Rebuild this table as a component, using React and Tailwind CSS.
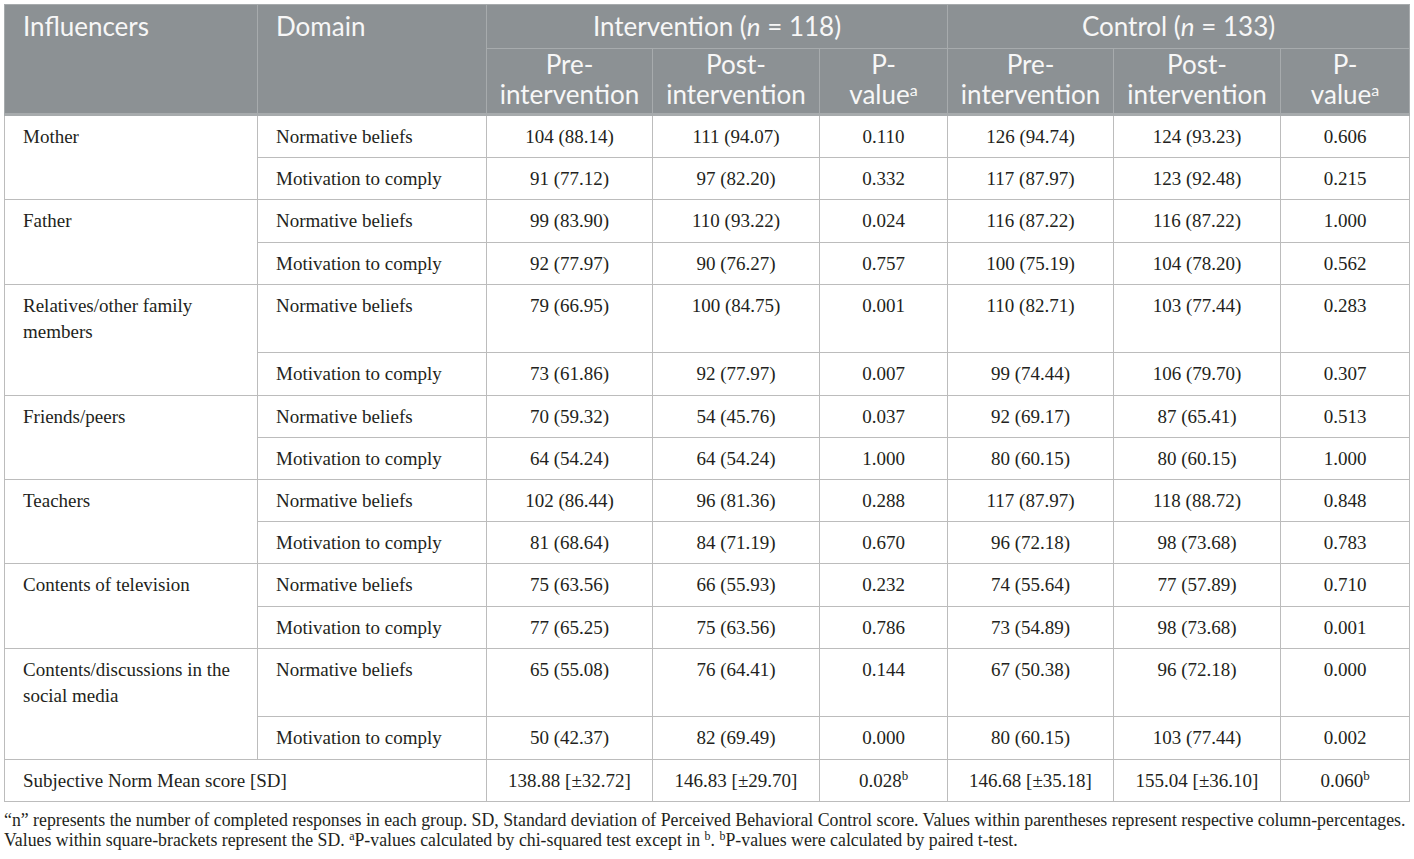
const rows = [
  {
    name: "Mother",
    wrap: false,
    data: [
      ["Normative beliefs", "104 (88.14)", "111 (94.07)", "0.110", "126 (94.74)", "124 (93.23)", "0.606"],
      ["Motivation to comply", "91 (77.12)", "97 (82.20)", "0.332", "117 (87.97)", "123 (92.48)", "0.215"],
    ],
  },
  {
    name: "Father",
    wrap: false,
    data: [
      ["Normative beliefs", "99 (83.90)", "110 (93.22)", "0.024", "116 (87.22)", "116 (87.22)", "1.000"],
      ["Motivation to comply", "92 (77.97)", "90 (76.27)", "0.757", "100 (75.19)", "104 (78.20)", "0.562"],
    ],
  },
  {
    name: "Relatives/other family members",
    wrap: true,
    data: [
      ["Normative beliefs", "79 (66.95)", "100 (84.75)", "0.001", "110 (82.71)", "103 (77.44)", "0.283"],
      ["Motivation to comply", "73 (61.86)", "92 (77.97)", "0.007", "99 (74.44)", "106 (79.70)", "0.307"],
    ],
  },
  {
    name: "Friends/peers",
    wrap: false,
    data: [
      ["Normative beliefs", "70 (59.32)", "54 (45.76)", "0.037", "92 (69.17)", "87 (65.41)", "0.513"],
      ["Motivation to comply", "64 (54.24)", "64 (54.24)", "1.000", "80 (60.15)", "80 (60.15)", "1.000"],
    ],
  },
  {
    name: "Teachers",
    wrap: false,
    data: [
      ["Normative beliefs", "102 (86.44)", "96 (81.36)", "0.288", "117 (87.97)", "118 (88.72)", "0.848"],
      ["Motivation to comply", "81 (68.64)", "84 (71.19)", "0.670", "96 (72.18)", "98 (73.68)", "0.783"],
    ],
  },
  {
    name: "Contents of television",
    wrap: false,
    data: [
      ["Normative beliefs", "75 (63.56)", "66 (55.93)", "0.232", "74 (55.64)", "77 (57.89)", "0.710"],
      ["Motivation to comply", "77 (65.25)", "75 (63.56)", "0.786", "73 (54.89)", "98 (73.68)", "0.001"],
    ],
  },
  {
    name: "Contents/discussions in the social media",
    wrap: true,
    data: [
      ["Normative beliefs", "65 (55.08)", "76 (64.41)", "0.144", "67 (50.38)", "96 (72.18)", "0.000"],
      ["Motivation to comply", "50 (42.37)", "82 (69.49)", "0.000", "80 (60.15)", "103 (77.44)", "0.002"],
    ],
  },
];

const th = "border border-[#a7abad] font-normal align-top text-[#f7f7f7]";
const td = "border border-[#bcbcbc] pt-[8px] pb-[7.2px] leading-[26px] align-top";

export default function App() {
  return (
    <div className="w-[1414px] h-[859px] bg-white pt-[4px] pl-[4px] text-[#231f20] font-['Liberation_Serif',serif]">
      <table className="table-fixed border-collapse w-[1405px] text-[19px]">
        <colgroup>
          <col className="w-[253px]" />
          <col className="w-[229px]" />
          <col className="w-[166px]" />
          <col className="w-[167px]" />
          <col className="w-[128px]" />
          <col className="w-[166px]" />
          <col className="w-[167px]" />
          <col className="w-[129px]" />
        </colgroup>
        <thead className="bg-[#8c9194] font-['Lato',sans-serif] text-[26px]">
          <tr>
            <th rowSpan={2} className={`${th} text-left px-[18px] pt-[6px] leading-[30px] border-b-[3px]`}>
              Influencers
            </th>
            <th rowSpan={2} className={`${th} text-left px-[18px] pt-[6px] leading-[30px] border-b-[3px]`}>
              Domain
            </th>
            <th colSpan={3} className={`${th} text-center pt-[6px] pb-[7px] leading-[30px]`}>
              Intervention (<i>n</i> = 118)
            </th>
            <th colSpan={3} className={`${th} text-center pt-[6px] pb-[7px] leading-[30px]`}>
              Control (<i>n</i> = 133)
            </th>
          </tr>
          <tr>
            {[0, 1].map((g) => [
              <th key={`pre${g}`} className={`${th} text-center pt-0 pb-[4px] leading-[30px] border-b-[3px]`}>
                Pre-
                <br />
                intervention
              </th>,
              <th key={`post${g}`} className={`${th} text-center pt-0 pb-[4px] leading-[30px] border-b-[3px]`}>
                Post-
                <br />
                intervention
              </th>,
              <th key={`p${g}`} className={`${th} text-center pt-0 pb-[4px] leading-[30px] border-b-[3px]`}>
                P-
                <br />
                value<sup className="text-[16px]">a</sup>
              </th>,
            ])}
          </tr>
        </thead>
        <tbody>
          {rows.map((r) =>
            r.data.map((d, i) => (
              <tr key={r.name + i}>
                {i === 0 && (
                  <td rowSpan={2} className={`${td} px-[18px] text-left`}>
                    {r.name}
                  </td>
                )}
                <td className={`${td} px-[18px] text-left`}>
                  {d[0]}
                  {r.wrap && i === 0 && <span className="block h-[26.5px]" />}
                </td>
                {d.slice(1).map((v, j) => (
                  <td key={j} className={`${td} text-center`}>
                    {v}
                  </td>
                ))}
              </tr>
            ))
          )}
          <tr>
            <td colSpan={2} className={`${td} px-[18px] text-left`}>
              Subjective Norm Mean score [SD]
            </td>
            <td className={`${td} text-center`}>138.88 [±32.72]</td>
            <td className={`${td} text-center`}>146.83 [±29.70]</td>
            <td className={`${td} text-center`}>
              0.028<sup className="text-[13px]">b</sup>
            </td>
            <td className={`${td} text-center`}>146.68 [±35.18]</td>
            <td className={`${td} text-center`}>155.04 [±36.10]</td>
            <td className={`${td} text-center`}>
              0.060<sup className="text-[13px]">b</sup>
            </td>
          </tr>
        </tbody>
      </table>
      <p className="mt-[8px] text-[17.8px] leading-[20px] whitespace-nowrap">
        “n” represents the number of completed responses in each group. SD, Standard deviation of Perceived Behavioral
        Control score. Values within parentheses represent respective column-percentages.
        <br />
        Values within square-brackets represent the SD. <sup className="text-[12px]">a</sup>P-values calculated by
        chi-squared test except in <sup className="text-[12px]">b</sup>. <sup className="text-[12px]">b</sup>P-values
        were calculated by paired t-test.
      </p>
    </div>
  );
}
